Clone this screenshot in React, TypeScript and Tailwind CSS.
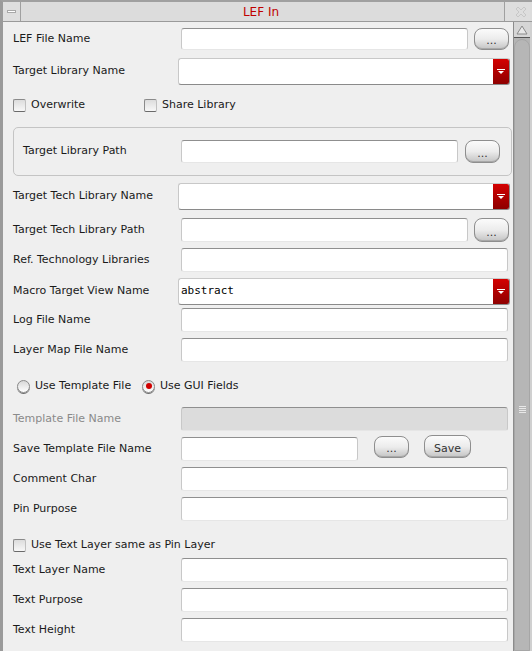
import React from "react";

const font = { fontFamily: '"DejaVu Sans", "Noto Sans", sans-serif' };

function Input({ w, disabled, children }: { w: string; disabled?: boolean; children?: React.ReactNode }) {
  return (
    <div
      className={`${w} h-full rounded-[3px] border border-t-[#8f8f8f] border-l-[#c8c8c8] border-r-[#c8c8c8] border-b-[#e6e6e6] ${
        disabled ? "bg-[#dcdcdc]" : "bg-white"
      } flex items-center pl-[2px]`}
    >
      {children}
    </div>
  );
}

function Combo({ value }: { value?: string }) {
  return (
    <div className="w-[332px] h-full flex rounded-[3px] border border-t-[#c8c8c8] border-l-[#c8c8c8] border-b-[#8a8a8a] border-r-[#8a8a8a] bg-white overflow-hidden">
      <div className="flex-1 flex items-center pl-[2px] text-[11px] text-black" style={{ fontFamily: '"DejaVu Sans Mono", monospace' }}>
        {value}
      </div>
      <div className="w-[16px] h-full bg-gradient-to-b from-[#d40000] to-[#8e0000] flex items-center justify-center">
        <svg width="8" height="5" viewBox="0 0 8 5">
          <rect x="0" y="0" width="8" height="1" fill="#fff" />
          <polygon points="1,2 7,2 4,5" fill="#fff" />
        </svg>
      </div>
    </div>
  );
}

function DotsBtn({ w = "w-[35px]", label = "..." }: { w?: string; label?: string }) {
  return (
    <div
      className={`${w} h-full rounded-[8px] border border-[#8e8e8e] bg-gradient-to-b from-[#fbfbfb] via-[#ececec] to-[#c4c4c4] flex items-end justify-center pb-[3px] text-[11px] text-[#333] leading-none shadow-[inset_0_-1px_0_#a8a8a8]`}
    >
      {label}
    </div>
  );
}

function Check({ label, className = "" }: { label: string; className?: string }) {
  return (
    <div className={`flex items-center ${className}`}>
      <div className="w-[13px] h-[13px] rounded-[2px] border border-t-[#8a8a8a] border-l-[#8a8a8a] border-r-[#c0c0c0] border-b-[#6a6a6a] bg-gradient-to-b from-[#dcdcdc] to-[#f8f8f8]" />
      <span className="ml-[5px] text-[11px] text-[#1a1a1a]">{label}</span>
    </div>
  );
}

function Radio({ checked, label, className = "" }: { checked?: boolean; label: string; className?: string }) {
  return (
    <div className={`flex items-center ${className}`}>
      <div className="w-[13px] h-[13px] rounded-full border border-[#8a8a8a] bg-gradient-to-b from-[#d8d8d8] to-[#ffffff] flex items-center justify-center shadow-[0_1px_0_#6a6a6a]">
        {checked && <div className="w-[6px] h-[6px] rounded-full bg-[#d00000]" />}
      </div>
      <span className="ml-[5px] text-[11px] text-[#1a1a1a]">{label}</span>
    </div>
  );
}

function Row({ label, top, h, children, muted }: { label: string; top: string; h: string; children: React.ReactNode; muted?: boolean }) {
  return (
    <div className={`flex items-center ${top} ${h}`}>
      <div className={`w-[168px] shrink-0 text-[11px] ${muted ? "text-[#8a8a8a]" : "text-[#1a1a1a]"}`}>{label}</div>
      <div className="flex h-full items-center">{children}</div>
    </div>
  );
}

export default function App() {
  return (
    <div className="w-[532px] h-[651px] bg-[#9a9a9a] overflow-hidden flex flex-col" style={font}>
      {/* title bar */}
      <div className="h-[22px] flex bg-[#dcdcdc] border-t-[2px] border-t-[#a0a0a0] border-b border-b-[#9a9a9a] border-l-[3px] border-l-[#9a9a9a] pr-[2px]">
        <div className="w-[18px] h-full border-r border-[#a0a0a0] flex items-center justify-center bg-[#dedede]">
          <div className="w-[9px] h-[3px] bg-white border border-[#a8a8a8]" />
        </div>
        <div className="flex-1 flex items-center justify-center text-[12px] text-[#c00000] ml-[1px] pr-[4px]">LEF In</div>
        <div className="w-[26px] h-full border-l border-[#a0a0a0] flex items-center justify-end pr-[3px] bg-[#dedede]">
          <svg width="12" height="12" viewBox="0 0 12 12">
            <path d="M1 3 L3 1 L6 4 L9 1 L11 3 L8 6 L11 9 L9 11 L6 8 L3 11 L1 9 L4 6 Z" fill="none" stroke="#c4c4c4" strokeWidth="0.9" />
          </svg>
        </div>
      </div>
      {/* body */}
      <div className="flex-1 flex ml-[3px] bg-[#efefef] min-h-0">
        <div className="flex-1 flex flex-col pl-[10px]">
          <Row label="LEF File Name" top="mt-[6px]" h="h-[22px]">
            <Input w="w-[287px]" />
            <div className="ml-[6px] h-full"><DotsBtn /></div>
          </Row>
          <Row label="Target Library Name" top="mt-[8px]" h="h-[27px]">
            <div className="-ml-[3px] h-full"><Combo /></div>
          </Row>
          <div className="mt-[10px] h-[20px] flex items-center">
            <Check label="Overwrite" className="w-[131px]" />
            <Check label="Share Library" />
          </div>
          <div className="mt-[12px] h-[49px] mr-[1px] rounded-[5px] border border-[#c4c4c4] flex items-center pl-[9px]">
            <div className="w-[158px] text-[11px] text-[#1a1a1a]">Target Library Path</div>
            <div className="h-[23px] flex">
              <Input w="w-[277px]" />
              <div className="ml-[7px] h-full"><DotsBtn /></div>
            </div>
          </div>
          <Row label="Target Tech Library Name" top="mt-[7px]" h="h-[27px]">
            <div className="-ml-[3px] h-full"><Combo /></div>
          </Row>
          <Row label="Target Tech Library Path" top="mt-[8px]" h="h-[24px]">
            <Input w="w-[287px]" />
            <div className="ml-[6px] h-full"><DotsBtn /></div>
          </Row>
          <Row label="Ref. Technology Libraries" top="mt-[6px]" h="h-[24px]">
            <Input w="w-[327px]" />
          </Row>
          <Row label="Macro Target View Name" top="mt-[6px]" h="h-[27px]">
            <div className="-ml-[3px] h-full"><Combo value="abstract" /></div>
          </Row>
          <Row label="Log File Name" top="mt-[3px]" h="h-[24px]">
            <Input w="w-[327px]" />
          </Row>
          <Row label="Layer Map File Name" top="mt-[6px]" h="h-[24px]">
            <Input w="w-[327px]" />
          </Row>
          <div className="mt-[14px] h-[20px] flex items-center pl-[4px]">
            <Radio label="Use Template File" className="w-[125px]" />
            <Radio label="Use GUI Fields" checked />
          </div>
          <Row label="Template File Name" top="mt-[11px]" h="h-[24px]" muted>
            <Input w="w-[327px]" disabled />
          </Row>
          <Row label="Save Template File Name" top="mt-[6px]" h="h-[24px]">
            <Input w="w-[177px]" />
            <div className="ml-[16px] h-[22px] -mt-[5px]"><DotsBtn /></div>
            <div className="ml-[15px] h-[23px] -mt-[6px]"><DotsBtn w="w-[47px]" label="Save" /></div>
          </Row>
          <Row label="Comment Char" top="mt-[6px]" h="h-[24px]">
            <Input w="w-[327px]" />
          </Row>
          <Row label="Pin Purpose" top="mt-[6px]" h="h-[24px]">
            <Input w="w-[327px]" />
          </Row>
          <div className="mt-[14px] h-[20px] flex items-center">
            <Check label="Use Text Layer same as Pin Layer" />
          </div>
          <Row label="Text Layer Name" top="mt-[3px]" h="h-[24px]">
            <Input w="w-[327px]" />
          </Row>
          <Row label="Text Purpose" top="mt-[6px]" h="h-[24px]">
            <Input w="w-[327px]" />
          </Row>
          <Row label="Text Height" top="mt-[6px]" h="h-[24px]">
            <Input w="w-[327px]" />
          </Row>
        </div>
        {/* scrollbar */}
        <div className="w-[19px] flex border-l border-[#8c8c8c]">
          <div className="w-[16px] flex flex-col bg-[#b4b4b4]">
            <div className="h-[16px] bg-[#d6d6d6] border-b border-[#555] flex items-center justify-center">
              <svg width="12" height="10" viewBox="0 0 12 10">
                <polygon points="6,1 11,9 1,9" fill="#e8e8e8" stroke="#8a8a8a" strokeWidth="1" />
              </svg>
            </div>
            <div className="flex-1 mt-[1px] rounded-t-[8px] bg-[#b6b6b6] border border-[#a6a6a6] flex items-center justify-center">
              <div className="flex flex-col gap-[1px] mt-[128px]">
                <div className="w-[7px] h-[1px] bg-[#e8e8e8]" />
                <div className="w-[7px] h-[1px] bg-[#e8e8e8]" />
                <div className="w-[7px] h-[1px] bg-[#e8e8e8]" />
                <div className="w-[7px] h-[1px] bg-[#e8e8e8]" />
              </div>
            </div>
          </div>
          <div className="w-[2px] bg-[#d0d0d0]" />
        </div>
      </div>
    </div>
  );
}
